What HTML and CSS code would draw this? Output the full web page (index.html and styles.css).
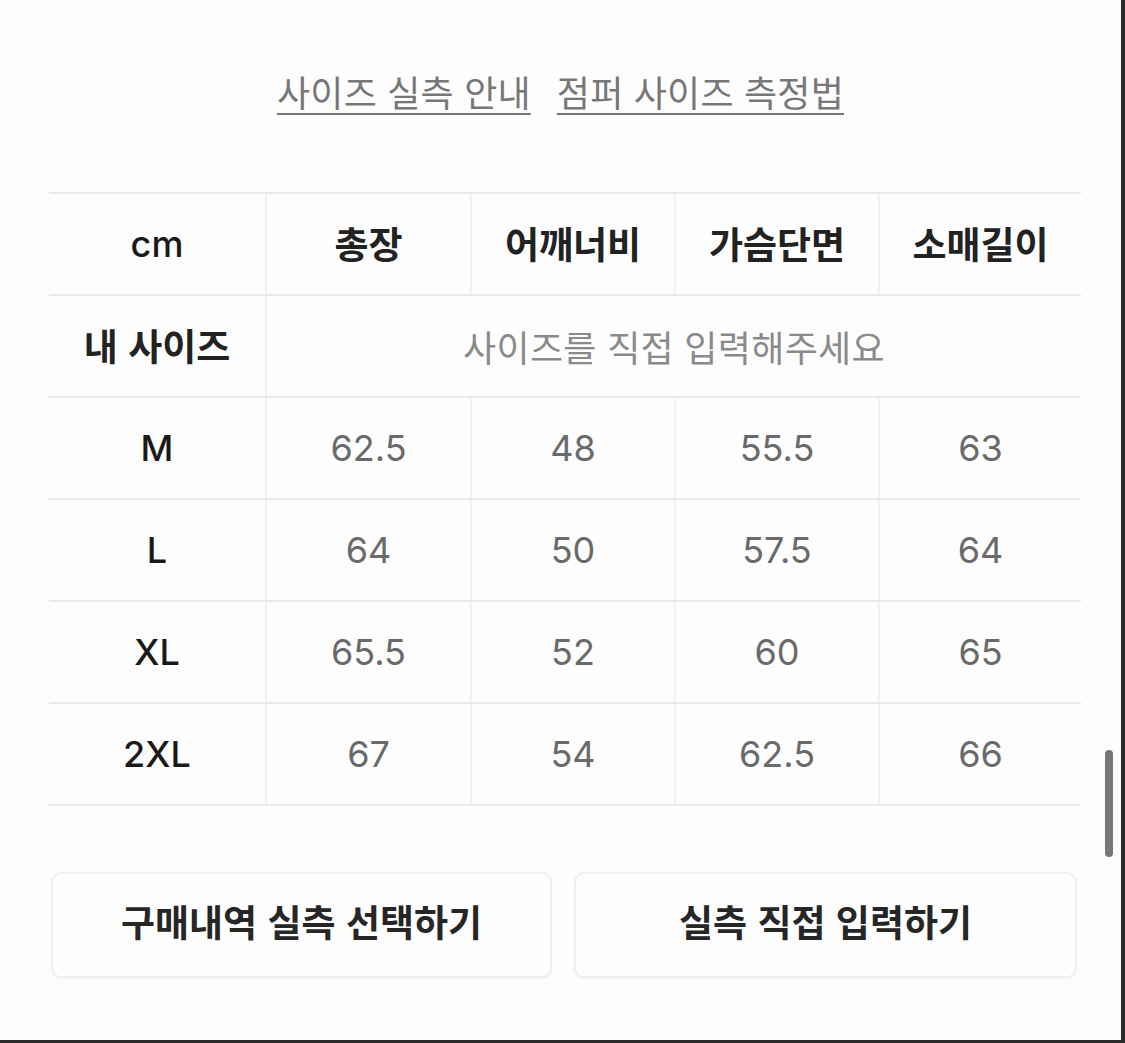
FILE: index.html
```html
<!DOCTYPE html>
<html lang="ko">
<head>
<meta charset="utf-8">
<title>사이즈 실측 안내</title>
<link rel="stylesheet" href="styles.css">
</head>
<body>
<div class="page">
  <nav class="links">
    <a class="link" href="#">사이즈 실측 안내</a>
    <a class="link" href="#">점퍼 사이즈 측정법</a>
  </nav>

  <table class="size-table">
    <colgroup>
      <col class="c-first"><col class="c-2"><col class="c-3"><col class="c-4"><col class="c-5">
    </colgroup>
    <thead>
      <tr>
        <th class="latin">cm</th><th>총장</th><th>어깨너비</th><th>가슴단면</th><th>소매길이</th>
      </tr>
    </thead>
    <tbody>
      <tr>
        <th>내 사이즈</th>
        <td class="placeholder" colspan="4">사이즈를 직접 입력해주세요</td>
      </tr>
      <tr><th class="latin">M</th><td>62.5</td><td>48</td><td>55.5</td><td>63</td></tr>
      <tr><th class="latin">L</th><td>64</td><td>50</td><td>57.5</td><td>64</td></tr>
      <tr><th class="latin">XL</th><td>65.5</td><td>52</td><td>60</td><td>65</td></tr>
      <tr><th class="latin">2XL</th><td>67</td><td>54</td><td>62.5</td><td>66</td></tr>
    </tbody>
  </table>

  <div class="actions">
    <button class="btn btn-left" type="button">구매내역 실측 선택하기</button>
    <button class="btn btn-right" type="button">실측 직접 입력하기</button>
  </div>

  <div class="scrollbar"></div>
</div>
</body>
</html>
```

FILE: styles.css
```css
* { box-sizing: border-box; }

html, body {
  margin: 0;
  padding: 0;
  background: #fdfdfd;
}

body {
  font-family: "Inter", "Noto Sans CJK KR", sans-serif;
  color: #1e1e1e;
}

.page {
  position: relative;
  width: 1125px;
  height: 1043px;
  background: #fdfdfd;
  border-right: 4px solid #2a2a2a;
  border-bottom: 3px solid #2a2a2a;
  overflow: hidden;
}

.links {
  display: flex;
  justify-content: center;
  gap: 26px;
  padding-top: 70px;
  height: 192px;
}

.link {
  font-family: "Noto Sans CJK KR", sans-serif;
  font-size: 36px;
  line-height: 42px;
  color: #777;
  text-decoration: underline;
  text-decoration-thickness: 2px;
  text-underline-offset: 6px;
  letter-spacing: 0.2px;
}

.size-table {
  margin-left: 49px;
  width: 1032px;
  border-collapse: collapse;
  table-layout: fixed;
}

.c-first { width: 217px; }
.c-2 { width: 205px; }
.c-3 { width: 204px; }
.c-4 { width: 204px; }
.c-5 { width: 202px; }

.size-table th,
.size-table td {
  height: 102px;
  padding: 0;
  text-align: center;
  vertical-align: middle;
  border-top: 2px solid #ebebeb;
  border-bottom: 2px solid #ebebeb;
  border-left: 2px solid #f0f0f0;
}

.size-table tr > :first-child { border-left: none; }

.size-table th {
  font-family: "Noto Sans CJK KR", sans-serif;
  font-weight: 700;
  font-size: 37px;
  color: #222;
  padding-bottom: 2px;
}

.size-table th.latin {
  font-family: "Inter", "Noto Sans CJK KR", sans-serif;
  font-size: 36px;
  font-weight: 500;
  color: #1a1a1a;
  padding-bottom: 0;
}

.size-table td {
  font-family: "Inter", "Noto Sans CJK KR", sans-serif;
  font-size: 36px;
  font-weight: 400;
  color: #6a6a6a;
}

.size-table td.placeholder {
  font-family: "Noto Sans CJK KR", sans-serif;
  font-size: 36px;
  color: #8a8a8a;
  letter-spacing: 0.3px;
}

.actions {
  display: flex;
  gap: 22px;
  margin-top: 66px;
  margin-left: 51px;
}

.btn {
  height: 106px;
  border: 2px solid #efefef;
  border-radius: 10px;
  background: #fdfdfd;
  box-shadow: 0 1px 2px rgba(0,0,0,0.04);
  font-family: "Noto Sans CJK KR", sans-serif;
  font-weight: 700;
  font-size: 37px;
  color: #262626;
  padding: 0 0 8px;
  cursor: pointer;
}

.btn-left { width: 501px; }
.btn-right { width: 503px; }

.scrollbar {
  position: absolute;
  left: 1105px;
  top: 750px;
  width: 8px;
  height: 107px;
  border-radius: 4px;
  background: #777;
}
```
